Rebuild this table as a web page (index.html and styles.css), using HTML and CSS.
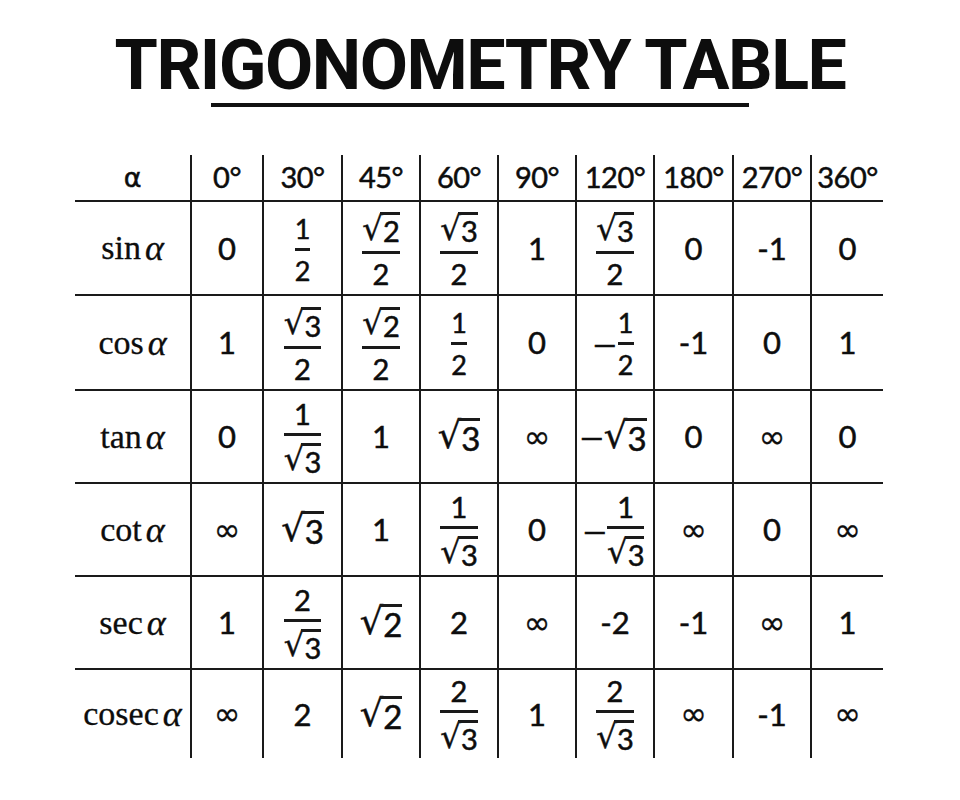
FILE: index.html
```html
<!DOCTYPE html>
<html lang="en">
<head>
<meta charset="utf-8">
<title>Trigonometry Table</title>
<link rel="stylesheet" href="styles.css">
</head>
<body>
<main class="page">
  <h1 class="title">TRIGONOMETRY TABLE</h1>
  <div class="rule"></div>
  <div class="table">
    <div class="c head alpha">α</div>
    <div class="c head">0°</div>
    <div class="c head">30°</div>
    <div class="c head">45°</div>
    <div class="c head">60°</div>
    <div class="c head">90°</div>
    <div class="c head">120°</div>
    <div class="c head">180°</div>
    <div class="c head">270°</div>
    <div class="c head">360°</div>

    <div class="c label">sin<i>α</i></div>
    <div class="c"><span class="num">0</span></div>
    <div class="c"><span class="frac small"><span class="n">1</span><span class="bar"></span><span class="d">2</span></span></div>
    <div class="c"><span class="frac"><span class="n"><span class="sqrt"><span class="rad">√</span><span class="under">2</span></span></span><span class="bar"></span><span class="d">2</span></span></div>
    <div class="c"><span class="frac"><span class="n"><span class="sqrt"><span class="rad">√</span><span class="under">3</span></span></span><span class="bar"></span><span class="d">2</span></span></div>
    <div class="c"><span class="num">1</span></div>
    <div class="c"><span class="frac"><span class="n"><span class="sqrt"><span class="rad">√</span><span class="under">3</span></span></span><span class="bar"></span><span class="d">2</span></span></div>
    <div class="c"><span class="num">0</span></div>
    <div class="c"><span class="num">-1</span></div>
    <div class="c"><span class="num">0</span></div>

    <div class="c label">cos<i>α</i></div>
    <div class="c"><span class="num">1</span></div>
    <div class="c"><span class="frac"><span class="n"><span class="sqrt"><span class="rad">√</span><span class="under">3</span></span></span><span class="bar"></span><span class="d">2</span></span></div>
    <div class="c"><span class="frac"><span class="n"><span class="sqrt"><span class="rad">√</span><span class="under">2</span></span></span><span class="bar"></span><span class="d">2</span></span></div>
    <div class="c"><span class="frac small"><span class="n">1</span><span class="bar"></span><span class="d">2</span></span></div>
    <div class="c"><span class="num">0</span></div>
    <div class="c"><span class="minus">−</span><span class="frac small"><span class="n">1</span><span class="bar"></span><span class="d">2</span></span></div>
    <div class="c"><span class="num">-1</span></div>
    <div class="c"><span class="num">0</span></div>
    <div class="c"><span class="num">1</span></div>

    <div class="c label">tan<i>α</i></div>
    <div class="c"><span class="num">0</span></div>
    <div class="c"><span class="frac"><span class="n">1</span><span class="bar"></span><span class="d"><span class="sqrt"><span class="rad">√</span><span class="under">3</span></span></span></span></div>
    <div class="c"><span class="num">1</span></div>
    <div class="c"><span class="num big"><span class="sqrt"><span class="rad">√</span><span class="under">3</span></span></span></div>
    <div class="c"><span class="num inf">∞</span></div>
    <div class="c"><span class="num big"><span class="minus tight">−</span><span class="sqrt"><span class="rad">√</span><span class="under">3</span></span></span></div>
    <div class="c"><span class="num">0</span></div>
    <div class="c"><span class="num inf">∞</span></div>
    <div class="c"><span class="num">0</span></div>

    <div class="c label">cot<i>α</i></div>
    <div class="c"><span class="num inf">∞</span></div>
    <div class="c"><span class="num big"><span class="sqrt"><span class="rad">√</span><span class="under">3</span></span></span></div>
    <div class="c"><span class="num">1</span></div>
    <div class="c"><span class="frac"><span class="n">1</span><span class="bar"></span><span class="d"><span class="sqrt"><span class="rad">√</span><span class="under">3</span></span></span></span></div>
    <div class="c"><span class="num">0</span></div>
    <div class="c"><span class="minus">−</span><span class="frac"><span class="n">1</span><span class="bar"></span><span class="d"><span class="sqrt"><span class="rad">√</span><span class="under">3</span></span></span></span></div>
    <div class="c"><span class="num inf">∞</span></div>
    <div class="c"><span class="num">0</span></div>
    <div class="c"><span class="num inf">∞</span></div>

    <div class="c label">sec<i>α</i></div>
    <div class="c"><span class="num">1</span></div>
    <div class="c"><span class="frac"><span class="n">2</span><span class="bar"></span><span class="d"><span class="sqrt"><span class="rad">√</span><span class="under">3</span></span></span></span></div>
    <div class="c"><span class="num big"><span class="sqrt"><span class="rad">√</span><span class="under">2</span></span></span></div>
    <div class="c"><span class="num">2</span></div>
    <div class="c"><span class="num inf">∞</span></div>
    <div class="c"><span class="num">-2</span></div>
    <div class="c"><span class="num">-1</span></div>
    <div class="c"><span class="num inf">∞</span></div>
    <div class="c"><span class="num">1</span></div>

    <div class="c label">cosec<i>α</i></div>
    <div class="c"><span class="num inf">∞</span></div>
    <div class="c"><span class="num">2</span></div>
    <div class="c"><span class="num big"><span class="sqrt"><span class="rad">√</span><span class="under">2</span></span></span></div>
    <div class="c"><span class="frac"><span class="n">2</span><span class="bar"></span><span class="d"><span class="sqrt"><span class="rad">√</span><span class="under">3</span></span></span></span></div>
    <div class="c"><span class="num">1</span></div>
    <div class="c"><span class="frac"><span class="n">2</span><span class="bar"></span><span class="d"><span class="sqrt"><span class="rad">√</span><span class="under">3</span></span></span></span></div>
    <div class="c"><span class="num inf">∞</span></div>
    <div class="c"><span class="num">-1</span></div>
    <div class="c"><span class="num inf">∞</span></div>
  </div>
</main>
</body>
</html>
```

FILE: styles.css
```css
* { box-sizing: border-box; }

html, body {
  margin: 0;
  padding: 0;
  background: #ffffff;
}

.page {
  width: 960px;
  height: 800px;
  display: flex;
  flex-direction: column;
  align-items: center;
  padding-top: 36px;
  color: #0d0d0d;
}

.title {
  margin: 0;
  font-family: Roboto, "Liberation Sans", sans-serif;
  font-weight: 700;
  font-size: 70px;
  line-height: 58px;
  letter-spacing: -1.5px;
  white-space: nowrap;
}

.rule {
  width: 538px;
  height: 4px;
  margin-top: 9px;
  background: #111;
}

.table {
  margin-top: 48px;
  margin-left: -2px;
  display: grid;
  grid-template-columns: 115px 72px 79px 78px 78px 78px 78px 79px 78px 73px;
  grid-template-rows: 47px 94px 95px 93px 93px 93px 88px;
  font-family: Lato, "Open Sans", sans-serif;
  -webkit-text-stroke: 0.5px #0d0d0d;
}

.c {
  display: flex;
  align-items: center;
  justify-content: center;
  border-bottom: 2px solid #1a1a1a;
  border-left: 2px solid #1a1a1a;
  font-size: 31px;
  line-height: 1;
}

.table > .c:nth-child(10n+1) {
  border-left: none;
}

.table > .c:nth-last-child(-n+10) {
  border-bottom: none;
}

.head {
  font-size: 29px;
  padding-bottom: 2px;
  letter-spacing: -0.5px;
}

.alpha {
  font-family: "DejaVu Sans", sans-serif;
  font-size: 27px;
  padding-bottom: 0;
}

.label {
  font-family: "Liberation Serif", serif;
  font-size: 34px;
  -webkit-text-stroke: 0.3px #0d0d0d;
}

.label i {
  font-family: "Liberation Serif", serif;
  font-style: italic;
  font-size: 36px;
  margin-left: 4px;
}

.num {
  display: inline-flex;
  align-items: center;
}

.inf {
  font-family: "DejaVu Sans", sans-serif;
  font-size: 32px;
  -webkit-text-stroke: 0.3px #0d0d0d;
}

.frac {
  display: inline-flex;
  flex-direction: column;
  align-items: center;
  font-size: 29px;
  padding-top: 3px;
}

.frac.small {
  font-size: 27px;
}

.frac .n,
.frac .d {
  display: flex;
  justify-content: center;
  line-height: 26px;
}

.bar {
  align-self: stretch;
  height: 3px;
  background: #1a1a1a;
  margin: 6px 0 7px;
}

.minus {
  font-size: 30px;
  transform: scaleX(1.5);
  margin-right: 4px;
  margin-top: 2px;
}

.minus.tight {
  margin-top: 0;
  margin-right: 3px;
}

.big {
  font-size: 33px;
}

.sqrt {
  display: inline-flex;
  align-items: flex-end;
}

.rad {
  font-family: "DejaVu Sans", sans-serif;
  font-size: 1.12em;
  line-height: 1;
  -webkit-text-stroke: 0.4px #0d0d0d;
}

.under {
  position: relative;
  padding-top: 4px;
  line-height: 1;
}

.under::before {
  content: "";
  position: absolute;
  top: 0;
  left: -3px;
  right: 0;
  height: 3px;
  background: #1a1a1a;
}
```
